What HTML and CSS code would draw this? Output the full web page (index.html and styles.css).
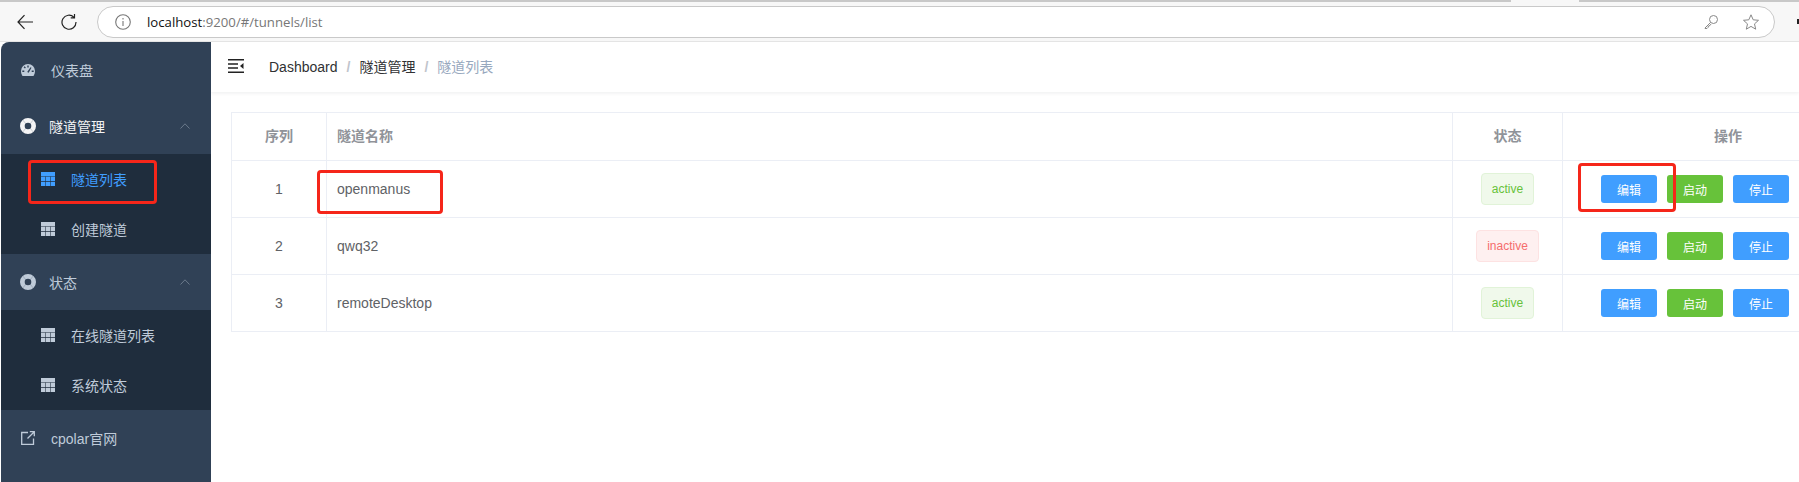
FILE: index.html
```html
<!DOCTYPE html>
<html lang="en">
<head>
  <meta charset="UTF-8" />
  <title>隧道列表</title>
  <link rel="stylesheet" href="styles.css">
</head>
<body>

  <!-- Browser toolbar -->
  <div class="tab-strip"><span class="tab-end tab-end-a"></span><span class="tab-end tab-end-b"></span></div>
  <header class="browser-bar">
    <svg class="nav-icon" viewBox="0 0 16 16"><path d="M16 8H1M7.500 1.200 1 8l6.500 6.800"/></svg>
    <svg class="nav-icon reload" viewBox="0 0 16 16"><path d="M13 3.300A7 7 0 1 0 15 8M13.500 0v3.800H9.700"/></svg>
    <div class="address">
      <svg class="info-icon" viewBox="0 0 16 16"><circle cx="8" cy="8" r="7.300"/><path d="M8 7v5M8 4v1.500"/></svg>
      <span class="url"><b>localhost</b>:9200/#/tunnels/list</span>
      <svg class="addr-icon key" viewBox="0 0 14 14"><circle cx="9.500" cy="4.500" r="4"/><path d="M6.500 7.500 1 13v.5h2L4 12.500l.5-1.500 1.500-.5 1-1.500M10.500 3.500h.1"/></svg>
      <svg class="addr-icon star" viewBox="0 0 16 16"><path d="M8 .8l2.200 5 5.300.5-4 3.600 1.200 5.300L8 12.400l-4.700 2.800 1.200-5.300-4-3.600 5.300-.5z"/></svg>
    </div>
    <span class="profile-dot"></span>
  </header>

  <div class="app">
    <aside class="sidebar">
      <a class="menu-item">
        <svg class="menu-icon gauge" viewBox="0 0 14 12"><path d="M7 0a7 7 0 0 0-7 7c0 1.900.6 3.500 1.500 5h11c.9-1.500 1.500-3.100 1.500-5a7 7 0 0 0-7-7zM6.300 1.500h1.400v2H6.300zM2.600 3.200l1-1 1.300 1.500-1 .9zM1.300 6.600h2V8h-2zM7.700 8.800 6.200 8l3.300-4.800 1 .6zM10.700 6.600h2V8h-2z" fill-rule="evenodd"/></svg>
        <span>仪表盘</span>
      </a>

      <div class="menu-head open">
        <svg class="help-icon" viewBox="0 0 16 16"><path d="M8 0a8 8 0 1 0 0 16A8 8 0 0 0 8 0zm0 4.700a3.300 3.300 0 1 1 0 6.600 3.300 3.300 0 0 1 0-6.600z" fill-rule="evenodd"/><path class="help-cuts" d="M3 2.200 5.800 5.800M13 2.200 10.200 5.800M3 13.800 5.800 10.200M13 13.800 10.200 10.200"/></svg>
        <span>隧道管理</span>
        <svg class="arrow" viewBox="0 0 10 6"><path d="M.5 5.500 5 .8l4.500 4.700"/></svg>
      </div>
      <ul class="submenu">
        <li class="sub-item active">
          <svg class="grid-icon" viewBox="0 0 14 14"><path d="M0 0h14v4.200H0zM0 4.800h4.300v4.300H0zM4.850 4.800h4.300v4.300h-4.300zM9.700 4.800H14v4.300H9.700zM0 9.700h4.300V14H0zM4.850 9.700h4.300V14h-4.300zM9.700 9.700H14V14H9.700z"/></svg>
          <span>隧道列表</span>
        </li>
        <li class="sub-item">
          <svg class="grid-icon" viewBox="0 0 14 14"><path d="M0 0h14v4.200H0zM0 4.800h4.300v4.300H0zM4.850 4.800h4.300v4.300h-4.300zM9.700 4.800H14v4.300H9.700zM0 9.700h4.300V14H0zM4.850 9.700h4.300V14h-4.300zM9.700 9.700H14V14H9.700z"/></svg>
          <span>创建隧道</span>
        </li>
      </ul>

      <div class="menu-head">
        <svg class="help-icon" viewBox="0 0 16 16"><path d="M8 0a8 8 0 1 0 0 16A8 8 0 0 0 8 0zm0 4.700a3.300 3.300 0 1 1 0 6.600 3.300 3.300 0 0 1 0-6.600z" fill-rule="evenodd"/><path class="help-cuts" d="M3 2.200 5.800 5.800M13 2.200 10.200 5.800M3 13.800 5.800 10.200M13 13.800 10.200 10.200"/></svg>
        <span>状态</span>
        <svg class="arrow" viewBox="0 0 10 6"><path d="M.5 5.500 5 .8l4.500 4.700"/></svg>
      </div>
      <ul class="submenu">
        <li class="sub-item">
          <svg class="grid-icon" viewBox="0 0 14 14"><path d="M0 0h14v4.200H0zM0 4.800h4.300v4.300H0zM4.850 4.800h4.300v4.300h-4.300zM9.700 4.800H14v4.300H9.700zM0 9.700h4.300V14H0zM4.850 9.700h4.300V14h-4.300zM9.700 9.700H14V14H9.700z"/></svg>
          <span>在线隧道列表</span>
        </li>
        <li class="sub-item">
          <svg class="grid-icon" viewBox="0 0 14 14"><path d="M0 0h14v4.200H0zM0 4.800h4.300v4.300H0zM4.850 4.800h4.300v4.300h-4.300zM9.700 4.800H14v4.300H9.700zM0 9.700h4.300V14H0zM4.850 9.700h4.300V14h-4.300zM9.700 9.700H14V14H9.700z"/></svg>
          <span>系统状态</span>
        </li>
      </ul>

      <a class="menu-item">
        <svg class="menu-icon link-icon" viewBox="0 0 14 14"><path d="M7 1.500H.7v11.800h11.800V7.500M8.800.7h4.500v4.500M13.300.7 6.500 7.500"/></svg>
        <span>cpolar官网</span>
      </a>
    </aside>

    <main class="main">
      <div class="navbar">
        <svg class="hamburger" viewBox="0 0 16 14"><path d="M0 0h16v1.500H0zM0 4.300h10v1.500H0zM0 8.300h10v1.500H0zM0 12.500h16V14H0zM15.500 4v6L12 7z"/></svg>
        <nav class="breadcrumb">
          <span>Dashboard</span><i>/</i><span>隧道管理</span><i>/</i><span class="current">隧道列表</span>
        </nav>
      </div>

      <div class="content">
        <table class="tunnels">
          <thead>
            <tr><th class="c-num">序列</th><th class="c-name">隧道名称</th><th class="c-state">状态</th><th class="c-ops">操作</th></tr>
          </thead>
          <tbody>
            <tr>
              <td class="c-num">1</td><td class="c-name">openmanus</td>
              <td class="c-state"><span class="tag ok">active</span></td>
              <td class="c-ops"><div class="ops"><button class="btn blue">编辑</button><button class="btn green">启动</button><button class="btn blue">停止</button></div></td>
            </tr>
            <tr>
              <td class="c-num">2</td><td class="c-name">qwq32</td>
              <td class="c-state"><span class="tag bad">inactive</span></td>
              <td class="c-ops"><div class="ops"><button class="btn blue">编辑</button><button class="btn green">启动</button><button class="btn blue">停止</button></div></td>
            </tr>
            <tr>
              <td class="c-num">3</td><td class="c-name">remoteDesktop</td>
              <td class="c-state"><span class="tag ok">active</span></td>
              <td class="c-ops"><div class="ops"><button class="btn blue">编辑</button><button class="btn green">启动</button><button class="btn blue">停止</button></div></td>
            </tr>
          </tbody>
        </table>
      </div>
    </main>
  </div>

  <!-- Red marks drawn over the screenshot -->
  <div class="mark mark-menu"></div>
  <div class="mark mark-name"></div>
  <div class="mark mark-edit"></div>

</body>
</html>
```

FILE: styles.css
```css
html, body {
  margin: 0;
  height: 482px;
  overflow: hidden;
}

body {
  position: relative;
  width: 1799px;
  background: #fff;
  font-family: "Liberation Sans", "Noto Sans CJK SC", sans-serif;
  font-size: 14px;
}

.tab-strip {
  height: 2px;
  background: #f7f7f7;
  display: flex;
  gap: 68px;
}

.tab-end {
  height: 2px;
  background: #c8c8c8;
}

.tab-end-a {
  width: 1511px;
}

.tab-end-b {
  flex: 1;
}

.browser-bar {
  height: 39px;
  background: #f7f7f7;
  border-bottom: 1px solid #e4e4e4;
  display: flex;
  align-items: center;
  padding-left: 17px;
}

.nav-icon {
  width: 16px;
  height: 16px;
  fill: none;
  stroke: #222;
  stroke-width: 1.200;
  flex: none;
}

.reload {
  margin-left: 28px;
}

.address {
  flex: none;
  box-sizing: border-box;
  width: 1678px;
  height: 32px;
  margin-left: 20px;
  padding: 0 15px 0 17px;
  background: #fff;
  border: 1px solid #c9c9c9;
  border-radius: 16px;
  display: flex;
  align-items: center;
}

.info-icon {
  width: 16px;
  height: 16px;
  flex: none;
  fill: none;
  stroke: #777;
  stroke-width: 1.100;
}

.url {
  margin-left: 16px;
  font-family: "Open Sans", sans-serif;
  font-size: 13.200px;
  color: #777;
}

.url b {
  font-weight: normal;
  color: #111;
}

.addr-icon {
  flex: none;
  fill: none;
  stroke: #888;
  stroke-width: 1;
}

.key {
  width: 14px;
  height: 14px;
  margin-left: auto;
}

.star {
  width: 16px;
  height: 16px;
  margin-left: 25px;
}

.profile-dot {
  width: 2px;
  height: 5px;
  margin-left: 22px;
  background: #222;
}

.app {
  display: flex;
  height: 440px;
}

.sidebar {
  flex: none;
  width: 210px;
  margin-left: 1px;
  border-top-left-radius: 8px;
  background: #304156;
  color: #bfcbd9;
}

.menu-item,
.menu-head {
  height: 56px;
  display: flex;
  align-items: center;
}

.menu-item {
  padding-left: 20px;
}

.menu-head {
  padding-left: 19px;
  color: #f4f4f5;
}

.menu-head + .submenu + .menu-head {
  color: #bfcbd9;
}

.menu-icon {
  width: 14px;
  height: 14px;
  margin-right: 16px;
  flex: none;
}

.gauge {
  height: 12px;
  fill: #bfcbd9;
}

.help-icon {
  width: 16px;
  height: 16px;
  margin-right: 13px;
  flex: none;
  fill: currentColor;
}

.help-cuts {
  fill: none;
  stroke: #304156;
  stroke-width: .400;
  opacity: .6;
}

.link-icon {
  fill: none;
  stroke: #bfcbd9;
  stroke-width: 1.300;
}

.arrow {
  width: 10px;
  height: 6px;
  margin-left: auto;
  margin-right: 21px;
  fill: none;
  stroke: #6b7a8c;
  stroke-width: 1;
}

.submenu {
  list-style: none;
  margin: 0;
  padding: 0;
  background: #1f2d3d;
}

.sub-item {
  height: 50px;
  display: flex;
  align-items: center;
  padding-left: 40px;
}

.grid-icon {
  width: 14px;
  height: 14px;
  margin-right: 16px;
  fill: #bfcbd9;
  flex: none;
}

.sub-item.active {
  color: #409eff;
}

.sub-item.active .grid-icon {
  fill: #409eff;
}

.main {
  flex: 1;
  min-width: 0;
  overflow: hidden;
}

.navbar {
  height: 50px;
  display: flex;
  align-items: center;
  padding-left: 17px;
  box-shadow: 0 1px 4px rgba(0, 21, 41, 0.08);
}

.hamburger {
  width: 16px;
  height: 14px;
  margin-top: -2px;
  fill: #222;
  flex: none;
}

.breadcrumb {
  margin-left: 25px;
  margin-top: -1px;
  color: #303133;
  line-height: 20px;
  display: flex;
  align-items: baseline;
}

.breadcrumb i {
  font-style: normal;
  font-weight: bold;
  color: #c0c4cc;
  margin: 0 9px;
}

.breadcrumb .current {
  color: #97a8be;
}

.content {
  padding: 20px 0 0 20px;
}

.tunnels {
  width: 1665px;
  table-layout: fixed;
  border-collapse: collapse;
  color: #606266;
}

.tunnels th,
.tunnels td {
  border: 1px solid #ebeef5;
  padding: 0;
  text-align: center;
}

.tunnels th {
  height: 44px;
  padding-bottom: 3px;
  color: #909399;
  font-weight: bold;
}

.tunnels td {
  height: 56px;
}

.c-num {
  width: 94px;
}

.tunnels .c-name {
  padding-left: 10px;
  text-align: left;
}

.c-state {
  width: 109px;
}

.c-ops {
  width: 332px;
}

.tunnels th.c-ops {
  width: 330px;
  padding-right: 2px;
}

.ops {
  display: flex;
  gap: 10px;
  padding-left: 38px;
}

.tag {
  box-sizing: border-box;
  display: inline-block;
  height: 32px;
  line-height: 30px;
  padding: 0 10px;
  border: 1px solid;
  border-radius: 4px;
  font-size: 12px;
  vertical-align: middle;
}

.tag.ok {
  background: #f0f9eb;
  border-color: #e1f3d8;
  color: #67c23a;
}

.tag.bad {
  background: #fef0f0;
  border-color: #fde2e2;
  color: #f56c6c;
}

.btn {
  box-sizing: border-box;
  width: 56px;
  height: 28px;
  padding: 0;
  border: none;
  border-radius: 3px;
  color: #fff;
  font-family: inherit;
  font-size: 12px;
}

.btn.blue {
  background: #409eff;
}

.btn.green {
  background: #67c23a;
}

.mark {
  position: absolute;
  box-sizing: border-box;
  border: 3px solid #f5261a;
  border-radius: 4px;
}

.mark-menu {
  left: 28px;
  top: 160px;
  width: 129px;
  height: 44px;
}

.mark-name {
  left: 317px;
  top: 170px;
  width: 126px;
  height: 44px;
}

.mark-edit {
  left: 1578px;
  top: 163px;
  width: 98px;
  height: 49px;
}
```
